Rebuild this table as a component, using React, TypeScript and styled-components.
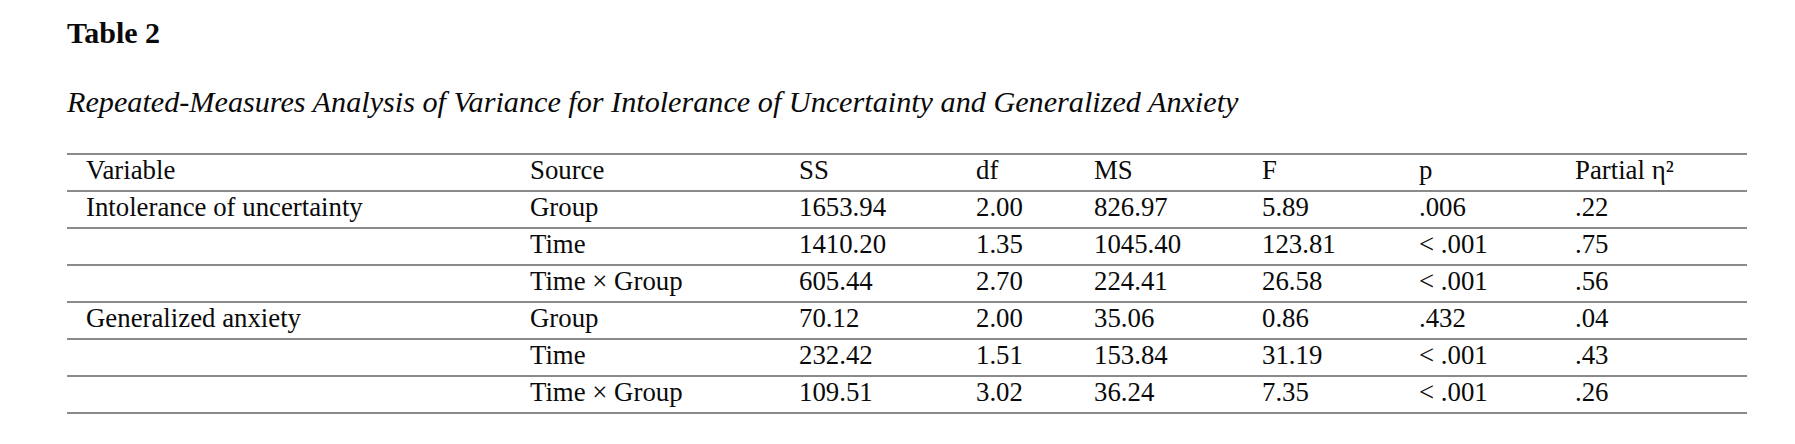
import React from "react";
import styled, { createGlobalStyle } from "styled-components";

type Row = {
  variable: string;
  source: string;
  ss: string;
  df: string;
  ms: string;
  f: string;
  p: string;
  eta: string;
};

const rows: Row[] = [
  { variable: "Intolerance of uncertainty", source: "Group", ss: "1653.94", df: "2.00", ms: "826.97", f: "5.89", p: ".006", eta: ".22" },
  { variable: "", source: "Time", ss: "1410.20", df: "1.35", ms: "1045.40", f: "123.81", p: "< .001", eta: ".75" },
  { variable: "", source: "Time × Group", ss: "605.44", df: "2.70", ms: "224.41", f: "26.58", p: "< .001", eta: ".56" },
  { variable: "Generalized anxiety", source: "Group", ss: "70.12", df: "2.00", ms: "35.06", f: "0.86", p: ".432", eta: ".04" },
  { variable: "", source: "Time", ss: "232.42", df: "1.51", ms: "153.84", f: "31.19", p: "< .001", eta: ".43" },
  { variable: "", source: "Time × Group", ss: "109.51", df: "3.02", ms: "36.24", f: "7.35", p: "< .001", eta: ".26" },
];

const columnWidths = [444, 269, 177, 118, 168, 157, 156, 191];

const App: React.FC = () => {
  return (
    <>
      <GlobalStyle />
      <Page>
        <TableNumber>Table 2</TableNumber>
        <TableTitle>
          Repeated-Measures Analysis of Variance for Intolerance of Uncertainty
          and Generalized Anxiety
        </TableTitle>
        <DataTable>
          <colgroup>
            {columnWidths.map((w, i) => (
              <Col key={i} $w={w} />
            ))}
          </colgroup>
          <thead>
            <tr>
              <HeadCell>Variable</HeadCell>
              <HeadCell>Source</HeadCell>
              <HeadCell>SS</HeadCell>
              <HeadCell>df</HeadCell>
              <HeadCell>MS</HeadCell>
              <HeadCell>F</HeadCell>
              <HeadCell>p</HeadCell>
              <HeadCell>Partial η²</HeadCell>
            </tr>
          </thead>
          <tbody>
            {rows.map((r, i) => (
              <tr key={i}>
                <Cell>{r.variable}</Cell>
                <Cell>{r.source}</Cell>
                <Cell>{r.ss}</Cell>
                <Cell>{r.df}</Cell>
                <Cell>{r.ms}</Cell>
                <Cell>{r.f}</Cell>
                <Cell>{r.p}</Cell>
                <Cell>{r.eta}</Cell>
              </tr>
            ))}
          </tbody>
        </DataTable>
      </Page>
    </>
  );
};

export default App;

const GlobalStyle = createGlobalStyle`
  html, body {
    margin: 0;
    padding: 0;
    background: #fff;
  }
`;

const Page = styled.div`
  width: 1795px;
  height: 444px;
  box-sizing: border-box;
  padding: 16px 0 0 67px;
  font-family: "Liberation Serif", "Times New Roman", serif;
  color: #0a0a0a;
  background: #fff;
  overflow: hidden;
`;

const TableNumber = styled.div`
  font-size: 30px;
  font-weight: bold;
  line-height: 34px;
`;

const TableTitle = styled.div`
  margin-top: 35px;
  font-size: 30.2px;
  font-style: italic;
  line-height: 34px;
`;

const DataTable = styled.table`
  margin-top: 34px;
  width: 1680px;
  table-layout: fixed;
  border-collapse: collapse;
  border-top: 2px solid #8a8a8a;
`;

const Col = styled.col<{ $w: number }>`
  width: ${(p) => p.$w}px;
`;

const HeadCell = styled.th`
  padding: 1px 0 5px 19px;
  height: 35px;
  box-sizing: border-box;
  text-align: left;
  font-weight: normal;
  font-size: 26.8px;
  line-height: 29px;
  white-space: nowrap;
  border-bottom: 2px solid #8a8a8a;
`;

const Cell = styled.td`
  padding: 1px 0 5px 19px;
  height: 35px;
  box-sizing: border-box;
  font-size: 26.8px;
  line-height: 29px;
  white-space: nowrap;
  border-bottom: 2px solid #8a8a8a;
`;
